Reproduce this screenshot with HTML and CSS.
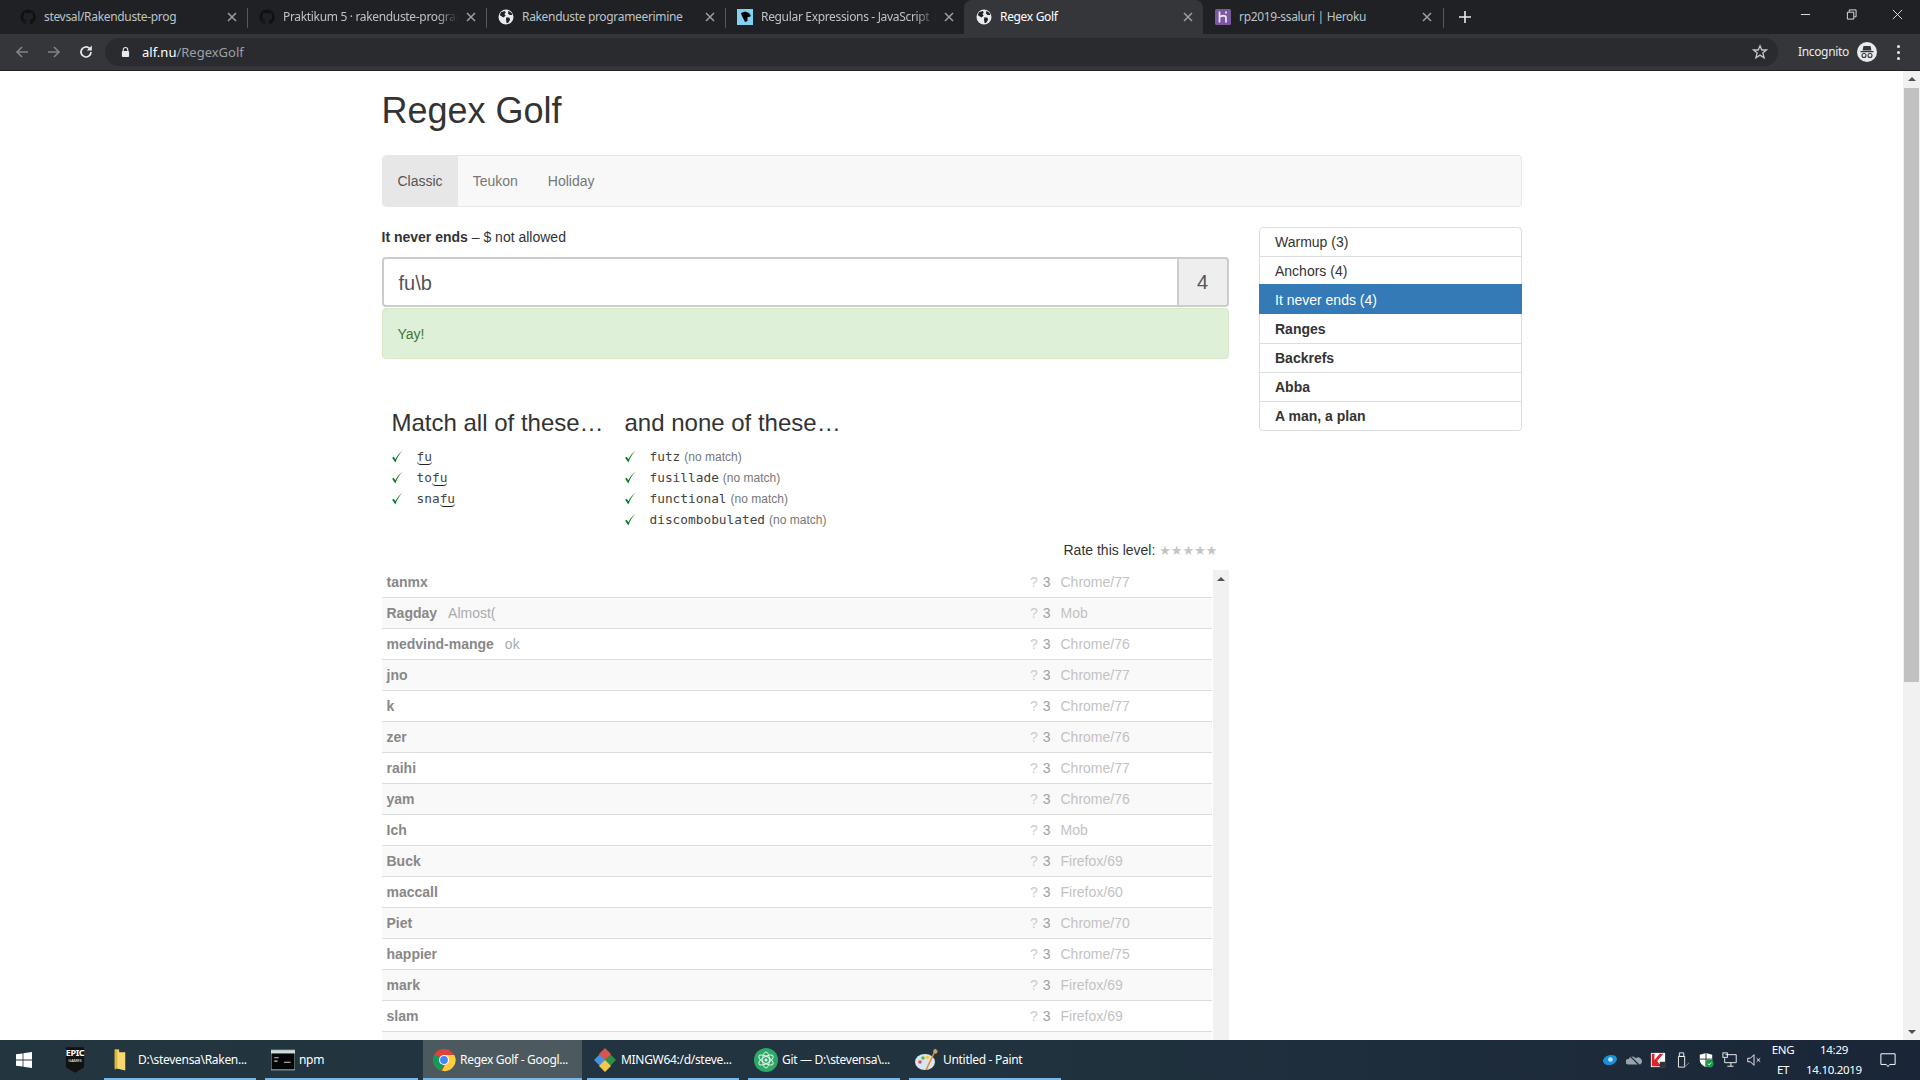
FILE: index.html
```html
<!DOCTYPE html>
<html lang="en">
<head>
<meta charset="utf-8">
<title>Regex Golf</title>
<link rel="stylesheet" href="styles.css">
</head>
<body>
<svg class="defs" width="0" height="0" aria-hidden="true">
  <symbol id="globe" viewBox="0 0 16 16">
    <circle cx="8" cy="8" r="7.5" fill="#e8eaed"/>
    <path d="M3 3.2 6.6 2 7.8 3.6 6.4 5 7.6 6.4 5.6 8.4 3 7 1.8 6ZM8.4 8.2 11.6 8.8 12 11 10 14 8.6 14 8 10.6ZM10.4 1.8 13.6 4 14.4 6 11.6 6 10 4.4Z" fill="#202124"/>
  </symbol>
  <symbol id="gh" viewBox="0 0 16 16">
    <path d="M8 .5a7.5 7.5 0 0 0-2.4 14.6c.4.1.5-.2.5-.4v-1.3c-2.1.5-2.5-1-2.5-1-.3-.9-.8-1.100-.8-1.100-.7-.5 0-.5 0-.5.8.1 1.200.8 1.200.8.700 1.200 1.800.8 2.200.6.100-.5.300-.8.500-1-1.700-.2-3.400-.8-3.400-3.700 0-.8.300-1.500.8-2-.1-.2-.3-1 .1-2 0 0 .6-.2 2.100.8a7 7 0 0 1 3.800 0c1.500-1 2.100-.8 2.100-.8.400 1 .2 1.800.1 2 .5.500.8 1.200.8 2 0 2.900-1.800 3.500-3.400 3.700.3.200.5.700.5 1.400v2.100c0 .2.100.5.500.4A7.500 7.500 0 0 0 8 .5Z" fill="#101113"/>
  </symbol>
  <symbol id="x" viewBox="0 0 10 10">
    <path d="M1 1 9 9M9 1 1 9" stroke="#9aa0a6" stroke-width="1.500" fill="none"/>
  </symbol>
  <symbol id="check" viewBox="0 0 14 14">
    <path d="M2 8.200 5 12.600C6.800 7.500 8.800 4.500 12 1.400 8.800 3.800 6.600 6.500 5 9.600L3.400 7.200Z" fill="#0a7a1e"/>
  </symbol>
</svg>

<header class="chrome">
  <div class="tabstrip">
    <div class="tab">
      <svg class="fav"><use href="#gh"/></svg>
      <span class="tab-title">stevsal/Rakenduste-prog</span>
      <svg class="tab-x"><use href="#x"/></svg>
    </div>
    <div class="tab tab-sep">
      <svg class="fav"><use href="#gh"/></svg>
      <span class="tab-title tab-fade">Praktikum 5 · rakenduste-programmeerimine</span>
      <svg class="tab-x"><use href="#x"/></svg>
    </div>
    <div class="tab tab-sep">
      <svg class="fav"><use href="#globe"/></svg>
      <span class="tab-title">Rakenduste programeerimine</span>
      <svg class="tab-x"><use href="#x"/></svg>
    </div>
    <div class="tab tab-sep">
      <svg class="fav" viewBox="0 0 16 16">
        <rect width="16" height="16" fill="#83d0f2"/>
        <path d="M4 4 8 2.500 12 4 14 7 12 8 10.500 8 10.500 12 8 13 6.500 10 5 7Z" fill="#000"/>
      </svg>
      <span class="tab-title tab-fade">Regular Expressions - JavaScript | MDN</span>
      <svg class="tab-x"><use href="#x"/></svg>
    </div>
    <div class="tab tab-active">
      <svg class="fav"><use href="#globe"/></svg>
      <span class="tab-title">Regex Golf</span>
      <svg class="tab-x"><use href="#x"/></svg>
    </div>
    <div class="tab">
      <svg class="fav" viewBox="0 0 16 16">
        <rect width="16" height="16" rx="1.500" fill="#79589f"/>
        <path d="M4.500 2.500V13.500M4.500 8C6 6.500 11 6 11 8.500V13.500M11 2.500V4.500" stroke="#e8e0f2" stroke-width="1.800" fill="none"/>
      </svg>
      <span class="tab-title">rp2019-ssaluri | Heroku</span>
      <svg class="tab-x"><use href="#x"/></svg>
    </div>
    <div class="tab-end">
      <svg class="plus" viewBox="0 0 12 12"><path d="M6 0V12M0 6H12" stroke="#e8eaed" stroke-width="1.600"/></svg>
    </div>
    <div class="winctl">
      <svg viewBox="0 0 12 12"><path d="M1 6H11" stroke="#e8eaed"/></svg>
      <svg viewBox="0 0 12 12"><path d="M3.500 3V1H11V8.500H9M1.500 3.500H8.500V11H1.500Z" stroke="#e8eaed" fill="none"/></svg>
      <svg viewBox="0 0 12 12"><path d="M1 1 11 11M11 1 1 11" stroke="#e8eaed"/></svg>
    </div>
  </div>
  <div class="toolbar">
    <svg class="nav-ic nav-dim" viewBox="0 0 16 16"><path d="M14 8H3M8 3 3 8 8 13" stroke="#7f8387" stroke-width="1.600" fill="none"/></svg>
    <svg class="nav-ic nav-dim" viewBox="0 0 16 16"><path d="M2 8H13M8 3 13 8 8 13" stroke="#7f8387" stroke-width="1.600" fill="none"/></svg>
    <svg class="nav-ic" viewBox="0 0 16 16"><path d="M13 8A5 5 0 1 1 11.500 4.400" stroke="#e8eaed" stroke-width="1.700" fill="none"/><path d="M13.800 1.500V6.500H8.800Z" fill="#e8eaed"/></svg>
    <div class="omnibox">
      <svg class="lock" viewBox="0 0 10 12"><path d="M2.500 5V3.500a2.500 2.500 0 0 1 5 0V5" stroke="#e8eaed" stroke-width="1.200" fill="none"/><rect x="1" y="5" width="8" height="6.500" rx="1" fill="#e8eaed"/></svg>
      <span class="url"><span class="url-host">alf.nu</span>/RegexGolf</span>
      <svg class="star" viewBox="0 0 16 16"><path d="M8 1.800 9.800 6H14.500L10.800 9 12.100 13.800 8 11.100 3.900 13.800 5.200 9 1.500 6H6.200Z" stroke="#c4c7ca" stroke-width="1.300" fill="none"/></svg>
    </div>
    <span class="incog-label">Incognito</span>
    <svg class="incog" viewBox="0 0 20 20">
      <circle cx="10" cy="10" r="10" fill="#e8eaed"/>
      <path d="M6.500 4H13.500L14.500 8.500H5.500ZM3.500 9H16.500V10.200H3.500Z" fill="#35363a"/>
      <circle cx="7" cy="13.500" r="2" fill="none" stroke="#35363a" stroke-width="1.100"/>
      <circle cx="13" cy="13.500" r="2" fill="none" stroke="#35363a" stroke-width="1.100"/>
    </svg>
    <div class="menu-dots"><i></i><i></i><i></i></div>
  </div>
</header>

<div class="viewport">
  <main class="page">
    <div class="container">
      <h1 class="title">Regex Golf</h1>
      <nav class="navbar">
        <a class="nav-link nav-link-on">Classic</a>
        <a class="nav-link">Teukon</a>
        <a class="nav-link">Holiday</a>
      </nav>
      <div class="layout">
        <section class="game">
          <p class="level-desc"><strong>It never ends</strong> – $ not allowed</p>
          <div class="input-group">
            <div class="regex-input">fu\b</div>
            <div class="regex-score">4</div>
          </div>
          <div class="alert">Yay!</div>
          <div class="words">
            <div class="word-col word-col-a">
              <h2 class="word-head">Match all of these…</h2>
              <ul class="word-list">
                <li><svg class="tick"><use href="#check"/></svg><code><span class="m">fu</span></code></li>
                <li><svg class="tick"><use href="#check"/></svg><code>to<span class="m">fu</span></code></li>
                <li><svg class="tick"><use href="#check"/></svg><code>sna<span class="m">fu</span></code></li>
              </ul>
            </div>
            <div class="word-col">
              <h2 class="word-head">and none of these…</h2>
              <ul class="word-list">
                <li><svg class="tick"><use href="#check"/></svg><code>futz</code> <small>(no match)</small></li>
                <li><svg class="tick"><use href="#check"/></svg><code>fusillade</code> <small>(no match)</small></li>
                <li><svg class="tick"><use href="#check"/></svg><code>functional</code> <small>(no match)</small></li>
                <li><svg class="tick"><use href="#check"/></svg><code>discombobulated</code> <small>(no match)</small></li>
              </ul>
            </div>
          </div>
          <div class="rate">Rate this level: <span class="stars">★★★★★</span></div>
          <div class="scores">
            <div class="rows">
              <div class="row"><b>tanmx</b><span class="note"></span><span class="q">?</span><span class="n">3</span><span class="ua">Chrome/77</span></div>
              <div class="row"><b>Ragday</b><span class="note">Almost(</span><span class="q">?</span><span class="n">3</span><span class="ua">Mob</span></div>
              <div class="row"><b>medvind-mange</b><span class="note">ok</span><span class="q">?</span><span class="n">3</span><span class="ua">Chrome/76</span></div>
              <div class="row"><b>jno</b><span class="note"></span><span class="q">?</span><span class="n">3</span><span class="ua">Chrome/77</span></div>
              <div class="row"><b>k</b><span class="note"></span><span class="q">?</span><span class="n">3</span><span class="ua">Chrome/77</span></div>
              <div class="row"><b>zer</b><span class="note"></span><span class="q">?</span><span class="n">3</span><span class="ua">Chrome/76</span></div>
              <div class="row"><b>raihi</b><span class="note"></span><span class="q">?</span><span class="n">3</span><span class="ua">Chrome/77</span></div>
              <div class="row"><b>yam</b><span class="note"></span><span class="q">?</span><span class="n">3</span><span class="ua">Chrome/76</span></div>
              <div class="row"><b>Ich</b><span class="note"></span><span class="q">?</span><span class="n">3</span><span class="ua">Mob</span></div>
              <div class="row"><b>Buck</b><span class="note"></span><span class="q">?</span><span class="n">3</span><span class="ua">Firefox/69</span></div>
              <div class="row"><b>maccall</b><span class="note"></span><span class="q">?</span><span class="n">3</span><span class="ua">Firefox/60</span></div>
              <div class="row"><b>Piet</b><span class="note"></span><span class="q">?</span><span class="n">3</span><span class="ua">Chrome/70</span></div>
              <div class="row"><b>happier</b><span class="note"></span><span class="q">?</span><span class="n">3</span><span class="ua">Chrome/75</span></div>
              <div class="row"><b>mark</b><span class="note"></span><span class="q">?</span><span class="n">3</span><span class="ua">Firefox/69</span></div>
              <div class="row"><b>slam</b><span class="note"></span><span class="q">?</span><span class="n">3</span><span class="ua">Firefox/69</span></div>
              <div class="row"></div>
            </div>
            <div class="inner-scroll"><span class="arrow-up"></span></div>
          </div>
        </section>
        <aside class="levels">
          <a class="level">Warmup (3)</a>
          <a class="level">Anchors (4)</a>
          <a class="level level-on">It never ends (4)</a>
          <a class="level level-b">Ranges</a>
          <a class="level level-b">Backrefs</a>
          <a class="level level-b">Abba</a>
          <a class="level level-b">A man, a plan</a>
        </aside>
      </div>
    </div>
  </main>
  <div class="page-scroll">
    <span class="arrow-up"></span>
    <div class="page-thumb"></div>
    <span class="arrow-down"></span>
  </div>
</div>

<footer class="taskbar">
  <svg class="win" viewBox="0 0 16 16"><path d="M0 2.300 6.600 1.400V7.500H0ZM7.400 1.300 16 0V7.500H7.400ZM0 8.400H6.600V14.600L0 13.700ZM7.400 8.400H16V16L7.400 14.700Z" fill="#fff"/></svg>
  <div class="epic">
    <svg viewBox="0 0 22 28"><path d="M1 0H21V22L11 28 1 22Z" fill="#111"/></svg>
    <span class="epic-t">EPIC</span>
    <span class="epic-g">GAMES</span>
  </div>
  <div class="task task-explorer">
    <svg class="task-ic" viewBox="0 0 16 26"><path d="M2 1H7V4H14V25L2 22Z" fill="#f8d775"/><path d="M2 1H5V22L2 24Z" fill="#e4b43a"/></svg>
    <span>D:\stevensa\Raken...</span>
  </div>
  <div class="task task-npm">
    <svg class="task-ic-w" viewBox="0 0 22 18"><rect width="22" height="18" fill="#050505" stroke="#9aa" stroke-width="1"/><rect width="22" height="3" fill="#cdd"/><path d="M3 7H7M3 10H6M12 11H18" stroke="#ccc"/></svg>
    <span>npm</span>
  </div>
  <div class="task task-chrome">
    <svg class="task-ic-w" viewBox="0 0 24 24">
      <circle cx="12" cy="12" r="11" fill="#db4437"/>
      <path d="M12 12 3 6.500A11 11 0 0 0 10 22.800Z" fill="#0f9d58"/>
      <path d="M12 7H22.300A11 11 0 0 1 10 22.800L15 13Z" fill="#ffcd40"/>
      <circle cx="12" cy="12" r="5" fill="#fff"/>
      <circle cx="12" cy="12" r="3.900" fill="#4285f4"/>
    </svg>
    <span>Regex Golf - Googl...</span>
  </div>
  <div class="task task-git">
    <svg class="task-ic-w" viewBox="0 0 24 24">
      <path d="M12 6 18 12 12 18 6 12Z" fill="#4a90e2" transform="translate(-5 0)"/>
      <path d="M12 6 18 12 12 18 6 12Z" fill="#2f8f46" transform="translate(5 0)"/>
      <path d="M12 6 18 12 12 18 6 12Z" fill="#d9534f" transform="translate(0 -6)"/>
      <path d="M12 6 18 12 12 18 6 12Z" fill="#f2c94c" transform="translate(0 6)"/>
    </svg>
    <span>MINGW64:/d/steve...</span>
  </div>
  <div class="task task-atom">
    <svg class="task-ic-w" viewBox="0 0 24 24">
      <circle cx="12" cy="12" r="12" fill="#2da866"/>
      <g fill="none" stroke="#dff3e6" stroke-width="1"><ellipse cx="12" cy="12" rx="8" ry="3.400" transform="rotate(30 12 12)"/><ellipse cx="12" cy="12" rx="8" ry="3.400" transform="rotate(-30 12 12)"/><ellipse cx="12" cy="12" rx="8" ry="3.400" transform="rotate(90 12 12)"/></g>
      <circle cx="12" cy="12" r="1.500" fill="#dff3e6"/>
    </svg>
    <span>Git — D:\stevensa\...</span>
  </div>
  <div class="task task-paint">
    <svg class="task-ic-w" viewBox="0 0 24 24">
      <ellipse cx="10" cy="14" rx="10" ry="8" fill="#d7e6f2"/>
      <circle cx="5" cy="14" r="1.800" fill="#d9534f"/><circle cx="8" cy="10" r="1.800" fill="#6ab04c"/><circle cx="12.500" cy="9.500" r="1.800" fill="#f2c94c"/>
      <path d="M21 1 11 22" stroke="#e58a2e" stroke-width="1.600"/>
      <path d="M19 1 23 3 21 6 18 4Z" fill="#c9a26a"/>
    </svg>
    <span>Untitled - Paint</span>
  </div>
  <div class="tray">
    <svg class="tray-ic" viewBox="0 0 18 14"><ellipse cx="9" cy="7" rx="8" ry="5.500" fill="#1d8fd6" transform="rotate(-15 9 7)"/><circle cx="9.500" cy="6.500" r="2.600" fill="#bfe6ff"/></svg>
    <svg class="tray-ic" viewBox="0 0 18 14"><path d="M2 12a3 3 0 0 1 1-6 4.500 4.500 0 0 1 8-1 3.500 3.500 0 0 1 5 7Z" fill="#9aa3ab"/><path d="M3 1 16 14" stroke="#1b2b3a" stroke-width="1.400"/></svg>
    <svg class="tray-ic" viewBox="0 0 18 18"><path d="M1 1H17V17H1Z" fill="#fff"/><path d="M2 2H5V9L11 2H15L8 10 13 16H2Z" fill="#e0222a"/><rect x="11" y="11" width="6" height="6" fill="#333"/></svg>
    <svg class="tray-ic" viewBox="0 0 18 18"><path d="M6 1H11V5H6ZM5 5H12V17H5Z" fill="none" stroke="#fff"/><path d="M11 14 13 16 17 12" stroke="#8a97a3" fill="none"/></svg>
    <svg class="tray-ic" viewBox="0 0 18 18"><path d="M9 1 16 3V9C16 13 12 16 9 17 6 16 2 13 2 9V3Z" fill="#fff"/><path d="M9 1V17M2 8H16" stroke="#1b2b3a"/><circle cx="13" cy="13" r="4.500" fill="#1a9a4a"/><path d="M11 13 12.500 14.500 15 11.800" stroke="#fff" fill="none"/></svg>
    <svg class="tray-ic" viewBox="0 0 18 18"><path d="M4 3H16V12H3V7M10 12V16M6 16H13" fill="none" stroke="#fff"/><rect x="1" y="1" width="5" height="5" fill="none" stroke="#fff"/></svg>
    <svg class="tray-ic" viewBox="0 0 18 18"><path d="M2 7H5L9 3V15L5 11H2Z" fill="none" stroke="#fff"/><path d="M12 7 16 11M16 7 12 11" stroke="#fff"/></svg>
    <div class="tray-lang"><span>ENG</span><span>ET</span></div>
    <div class="tray-clock"><span>14:29</span><span>14.10.2019</span></div>
    <svg class="tray-note" viewBox="0 0 18 18"><path d="M1 2H17V14H11L9 16.500 7 14H1Z" fill="none" stroke="#fff" stroke-width="1.100"/></svg>
  </div>
</footer>
</body>
</html>
```

FILE: styles.css
```css
* { box-sizing: border-box; }
html, body { margin: 0; height: 100%; }
body {
  display: flex;
  flex-direction: column;
  height: 100vh;
  overflow: hidden;
  font-family: "Liberation Sans", Arial, sans-serif;
  font-size: 14px;
  line-height: 20px;
  color: #333;
  background: #fff;
}
.defs { position: absolute; }

/* browser chrome */
.chrome { flex: none; font-family: "Noto Sans", sans-serif; }
.tabstrip {
  display: flex;
  align-items: flex-end;
  height: 34px;
  padding-left: 8px;
  background: #202124;
}
.tab {
  position: relative;
  display: flex;
  align-items: center;
  width: 239px;
  height: 34px;
  padding: 0 10px 0 12px;
  color: #bdc1c6;
  font-size: 12px;
  letter-spacing: -0.33px;
}
.tab-sep::before {
  content: "";
  position: absolute;
  left: 0;
  top: 8px;
  height: 20px;
  width: 1px;
  background: #55585c;
}
.tab-active {
  background: #35363a;
  border-radius: 8px 8px 0 0;
  color: #fff;
}
.fav { flex: none; width: 16px; height: 16px; margin-right: 8px; }
.tab-title { flex: 1; overflow: hidden; white-space: nowrap; }
.tab-fade {
  -webkit-mask-image: linear-gradient(90deg, #000 88%, transparent);
  mask-image: linear-gradient(90deg, #000 88%, transparent);
}
.tab-x { flex: none; width: 10px; height: 10px; margin-left: 8px; }
.tab-end {
  position: relative;
  display: flex;
  align-items: center;
  height: 34px;
  padding-left: 16px;
  border-left: 1px solid transparent;
}
.tab-end::before {
  content: "";
  position: absolute;
  left: 0;
  top: 8px;
  height: 20px;
  width: 1px;
  background: #55585c;
}
.plus { width: 12px; height: 12px; }
.winctl {
  display: flex;
  align-self: flex-start;
  gap: 35px;
  margin-left: auto;
  padding: 9px 17px 0 0;
}
.winctl svg { width: 11px; height: 11px; }
.toolbar {
  display: flex;
  align-items: center;
  height: 37px;
  padding-left: 14px;
  background: #35363a;
  border-bottom: 1px solid #202124;
}
.nav-ic { flex: none; width: 16px; height: 16px; margin-right: 16px; }
.omnibox {
  flex: none;
  display: flex;
  align-items: center;
  width: 1673px;
  height: 28px;
  margin-left: -5px;
  padding: 0 10px 0 16px;
  border-radius: 14px;
  background: #292b2e;
}
.lock { width: 9px; height: 12px; margin-right: 12px; }
.url { font-size: 13px; color: #9aa0a6; flex: 1; }
.url-host { color: #fff; }
.star { width: 16px; height: 16px; }
.incog-label { margin-left: 20px; font-size: 12px; color: #e8eaed; letter-spacing: -0.35px; }
.incog { width: 20px; height: 20px; margin-left: 8px; }
.menu-dots {
  display: flex;
  flex-direction: column;
  gap: 3px;
  margin-left: 20px;
}
.menu-dots i { width: 3px; height: 3px; border-radius: 50%; background: #e8eaed; }

/* page */
.viewport { flex: 1; display: flex; min-height: 0; }
.page { flex: 1; min-width: 0; overflow: hidden; }
.container { width: 1140px; margin: 0 auto; }
.title {
  margin: 0;
  padding-top: 20px;
  font-size: 36px;
  font-weight: 500;
  line-height: 40px;
  color: #333;
}
.navbar {
  display: flex;
  height: 52px;
  margin: 24px 0 20px;
  border: 1px solid #e7e7e7;
  border-radius: 4px;
  background: #f8f8f8;
}
.nav-link { padding: 15px; color: #777; }
.nav-link-on { background: #e7e7e7; color: #555; border-radius: 3px 0 0 3px; }
.layout { display: grid; grid-template-columns: 847px 263px; gap: 30px; }
.game { min-width: 0; }
.level-desc { margin: 0 0 10px; }
.input-group { display: flex; height: 50px; }
.regex-input {
  flex: 1;
  padding: 0 15px;
  border: 2px solid #ccc;
  border-right-width: 1px;
  border-radius: 4px 0 0 4px;
  font-size: 20px;
  line-height: 48px;
  color: #555;
}
.regex-score {
  width: 51px;
  border: 2px solid #ccc;
  border-left-width: 1px;
  border-radius: 0 4px 4px 0;
  background: #eee;
  font-size: 20px;
  line-height: 46px;
  text-align: center;
  color: #555;
}
.alert {
  height: 51px;
  margin-top: 1px;
  padding: 15px;
  border: 1px solid #d6e9c6;
  border-radius: 4px;
  background: #dff0d8;
  color: #3c763d;
}
.words { display: flex; margin-top: 51px; padding-left: 10px; }
.word-col-a { width: 233px; }
.word-head {
  margin: 0 0 10px;
  font-size: 24px;
  font-weight: 500;
  line-height: 26px;
  color: #333;
}
.word-list { margin: 0; padding: 0; height: 84px; list-style: none; line-height: 21px; }
.word-list li { display: flex; align-items: baseline; gap: 4px; height: 21px; white-space: pre; }
.tick { flex: none; align-self: center; width: 15px; height: 15px; margin: 0 8px 0 -2px; }
code {
  font-family: "DejaVu Sans Mono", "Liberation Mono", monospace;
  font-size: 12.800px;
  color: #444;
}
.m { display: inline-block; height: 19px; border-bottom: 1px solid #222; border-radius: 0 0 4px 4px; font-weight: 500; }
small { font-size: 12px; color: #777; }
.rate { height: 20px; margin-top: 10px; padding-right: 11px; text-align: right; }
.stars { color: #c4c4c4; letter-spacing: 0; font-size: 13px; line-height: 18px; font-family: "DejaVu Sans", sans-serif; }
.scores { display: flex; gap: 1px; margin-top: 7px; }
.rows { flex: 1; min-width: 0; }
.row {
  display: flex;
  height: 31px;
  align-items: center;
  padding: 0 5px;
  border-bottom: 1px solid #ddd;
  color: #888;
}
.row:nth-child(even) { background: #f9f9f9; }
.row b { margin-right: 11px; color: #888; }
.note { flex: 1; color: #aaa; }
.q { color: #ccc; }
.n { margin-left: 5px; color: #a0a0a0; }
.ua { width: 146px; margin-left: 10px; color: #c2c2c2; }
.inner-scroll {
  flex: none;
  display: flex;
  justify-content: center;
  width: 16px;
  margin-top: 3px;
  padding-top: 7px;
  background: #f1f1f1;
}
.arrow-up, .arrow-down {
  display: block;
  width: 0;
  height: 0;
  border-left: 4px solid transparent;
  border-right: 4px solid transparent;
}
.arrow-up { border-bottom: 4px solid #505050; }
.arrow-down { border-top: 4px solid #505050; }
.page-scroll {
  flex: none;
  display: flex;
  flex-direction: column;
  align-items: center;
  width: 17px;
  padding-top: 6px;
  background: #f1f1f1;
}
.page-thumb { width: 15px; height: 594px; margin-top: 7px; background: #c1c1c1; }
.page-scroll .arrow-down { margin-top: auto; margin-bottom: 6px; }
.levels { align-self: start; display: flex; flex-direction: column; border: 1px solid #ddd; border-radius: 4px; }
.level {
  height: 29px;
  padding: 4px 15.500px;
  border-top: 1px solid #ddd;
  color: #333;
}
.level:first-child { border-top: 0; height: 28px; }
.level-on { margin: -1px -1px 0; padding: 6px 16.500px 0; border-top: 0; height: 30px; background: #337ab7; color: #fff; }
.level-b { font-weight: 700; }
.level-on + .level { border-top: 0; padding-top: 5px; }

/* taskbar */
.taskbar {
  flex: none;
  display: flex;
  height: 40px;
  background: linear-gradient(90deg, #23363f 0%, #21333f 50%, #1a2638 100%);
  font-family: "Noto Sans", sans-serif;
  font-size: 12px;
  color: #fff;
  letter-spacing: -0.3px;
}
.win { flex: none; width: 16px; height: 16px; margin: 12px 0 0 16px; }
.epic { flex: none; position: relative; width: 20px; height: 30px; margin: 5px 0 0 33px; }
.epic svg { display: block; width: 20px; height: 30px; }
.epic-t { position: absolute; left: 0; right: 0; top: 3px; text-align: center; font-size: 9px; line-height: 10px; font-weight: 700; letter-spacing: -0.4px; }
.epic-g { position: absolute; left: 0; right: 0; top: 13px; text-align: center; font-size: 4px; line-height: 6px; letter-spacing: 0; }
.task {
  flex: none;
  display: flex;
  align-items: center;
  gap: 4px;
  height: 40px;
  padding: 1px 0 0 6px;
  border-bottom: 2px solid #76b9ed;
  white-space: nowrap;
  overflow: hidden;
}
.task-ic { flex: none; width: 14px; height: 24px; margin: 0 7px 0 3px; }
.task-ic-w { flex: none; width: 24px; height: 24px; }
.task-explorer { width: 152px; margin-left: 19px; }
.task-npm { width: 153px; margin-left: 9px; }
.task-chrome { width: 159px; margin-left: 5px; padding-left: 9px; background: #4c5a60; }
.task-git { width: 152px; margin-left: 5px; }
.task-atom { width: 152px; margin-left: 9px; }
.task-paint { width: 152px; margin-left: 9px; }
.tray { flex: 1; display: flex; align-items: center; min-width: 0; padding-left: 541px; }
.tray-ic { flex: none; width: 16px; height: 16px; margin-right: 8px; }
.tray-lang, .tray-clock {
  display: flex;
  flex-direction: column;
  align-items: center;
  line-height: 20px;
  font-size: 11.500px;
}
.tray-lang { width: 40px; margin-left: -7px; }
.tray-clock { width: 72px; margin-left: -5px; }
.tray-note { flex: none; width: 16px; height: 16px; margin-left: 10px; }
```
